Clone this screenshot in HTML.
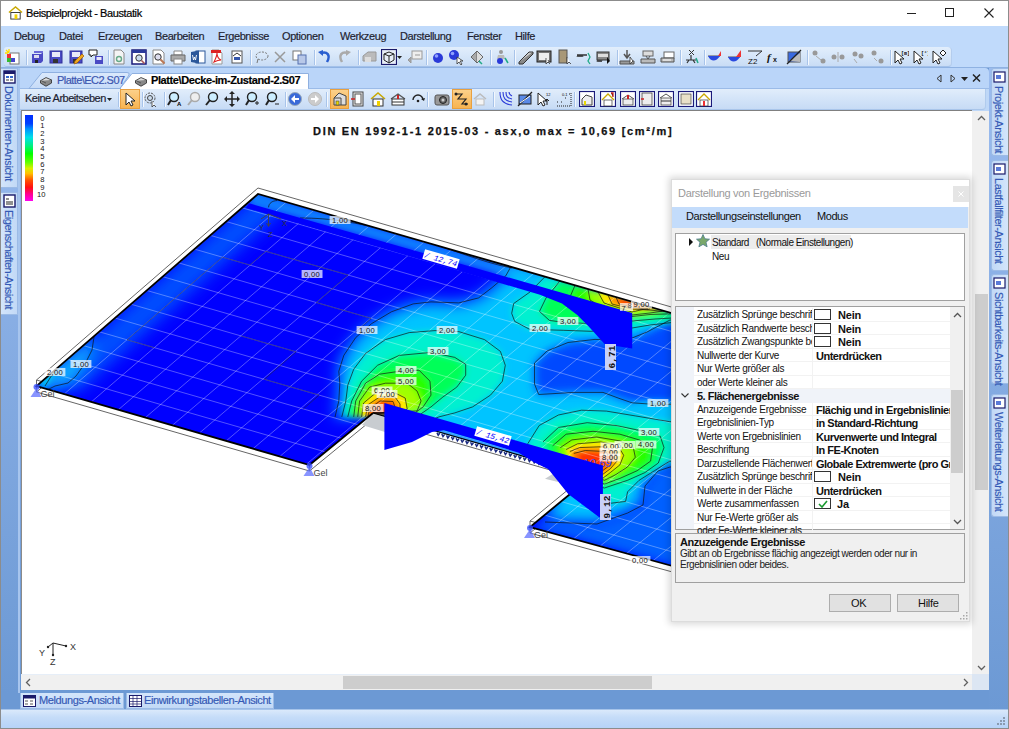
<!DOCTYPE html>
<html><head><meta charset="utf-8"><title>Baustatik</title>
<style>
*{margin:0;padding:0;box-sizing:border-box}
html,body{width:1009px;height:729px;overflow:hidden;background:#fff;font-family:"Liberation Sans",sans-serif;font-size:12px;color:#000}
.a{position:absolute}
.t{position:absolute;white-space:nowrap;line-height:1;-webkit-text-stroke:0.18px currentColor}
</style></head><body>
<div class="a" style="left:0px;top:0px;width:1009px;height:729px;background:#6c99d4"></div>
<div class="a" style="left:0px;top:0px;width:1009px;height:26px;background:#fff"></div>
<div class="a" style="left:0px;top:0px;width:1009px;height:1px;background:#8c8c8c"></div>
<div class="a" style="left:0px;top:0px;width:1px;height:729px;background:#8c8c8c"></div>
<div class="a" style="left:1008px;top:0px;width:1px;height:729px;background:#8c8c8c"></div>
<svg class="a" style="left:8px;top:5px" width="15" height="15" viewBox="0 0 16 16"><path d="M1 8l7-6 7 6" fill="none" stroke="#c9a800" stroke-width="1.5"/><rect x="3" y="8" width="10" height="7" fill="#fff" stroke="#333"/><rect x="7" y="10" width="3" height="5" fill="#f0d000"/></svg>
<div class="t" style="left:26px;top:8px;font-size:11px;color:#000;font-weight:normal;font-family:'Liberation Sans',sans-serif;letter-spacing:-0.4px;">Beispielprojekt - Baustatik</div>
<div class="a" style="left:907px;top:13px;width:9px;height:1px;background:#222"></div>
<div class="a" style="left:945px;top:8px;width:9px;height:9px;border:1px solid #222"></div>
<svg class="a" style="left:984px;top:8px" width="10" height="10" viewBox="0 0 10 10"><path d="M0.5 0.5L9.5 9.5M9.5 0.5L0.5 9.5" stroke="#222" stroke-width="1.1"/></svg>
<div class="a" style="left:1px;top:26px;width:1007px;height:41px;background:#c0dafb"></div>
<div class="t" style="left:14px;top:31px;font-size:11px;color:#1e1e30;font-weight:normal;font-family:'Liberation Sans',sans-serif;letter-spacing:-0.4px;">Debug</div>
<div class="t" style="left:59px;top:31px;font-size:11px;color:#1e1e30;font-weight:normal;font-family:'Liberation Sans',sans-serif;letter-spacing:-0.4px;">Datei</div>
<div class="t" style="left:98px;top:31px;font-size:11px;color:#1e1e30;font-weight:normal;font-family:'Liberation Sans',sans-serif;letter-spacing:-0.4px;">Erzeugen</div>
<div class="t" style="left:155px;top:31px;font-size:11px;color:#1e1e30;font-weight:normal;font-family:'Liberation Sans',sans-serif;letter-spacing:-0.4px;">Bearbeiten</div>
<div class="t" style="left:218px;top:31px;font-size:11px;color:#1e1e30;font-weight:normal;font-family:'Liberation Sans',sans-serif;letter-spacing:-0.4px;">Ergebnisse</div>
<div class="t" style="left:282px;top:31px;font-size:11px;color:#1e1e30;font-weight:normal;font-family:'Liberation Sans',sans-serif;letter-spacing:-0.4px;">Optionen</div>
<div class="t" style="left:340px;top:31px;font-size:11px;color:#1e1e30;font-weight:normal;font-family:'Liberation Sans',sans-serif;letter-spacing:-0.4px;">Werkzeug</div>
<div class="t" style="left:400px;top:31px;font-size:11px;color:#1e1e30;font-weight:normal;font-family:'Liberation Sans',sans-serif;letter-spacing:-0.4px;">Darstellung</div>
<div class="t" style="left:467px;top:31px;font-size:11px;color:#1e1e30;font-weight:normal;font-family:'Liberation Sans',sans-serif;letter-spacing:-0.4px;">Fenster</div>
<div class="t" style="left:515px;top:31px;font-size:11px;color:#1e1e30;font-weight:normal;font-family:'Liberation Sans',sans-serif;letter-spacing:-0.4px;">Hilfe</div>
<div class="a" style="left:4px;top:47px;width:948px;height:20px;border-radius:3px 4px 4px 3px;background:linear-gradient(#e2eefc,#d3e4f8 60%,#c9dcf5);border-bottom:1px solid #a3c1ea;border-right:1px solid #b4cdee"></div>
<div class="a" style="left:1px;top:67px;width:1007px;height:1px;background:#8fb2e2"></div>
<svg class="a" style="left:5px;top:49px" width="16" height="16" viewBox="0 0 16 16"><rect x="5" y="4" width="9" height="11" fill="#fff" stroke="#777"/><rect x="2" y="5" width="4" height="4" fill="#e33"/><rect x="2" y="9" width="4" height="4" fill="#3b3"/><rect x="6" y="9" width="4" height="4" fill="#44c"/><path d="M1 1l3 3M4 0v3M0 4h3" stroke="#fd0" stroke-width="1.3"/></svg>
<svg class="a" style="left:29px;top:49px" width="16" height="16" viewBox="0 0 16 16"><path d="M3 5h9l2-2v9l-2 2H3z" fill="#4a4ac4"/><rect x="5" y="6" width="5" height="3" fill="#dde"/><rect x="6" y="11" width="3" height="3" fill="#222"/><path d="M5 3h9" stroke="#6a6ad8" stroke-width="2"/></svg>
<svg class="a" style="left:48px;top:49px" width="16" height="16" viewBox="0 0 16 16"><rect x="2" y="2" width="12" height="12" fill="#4a4ac4" stroke="#30309a"/><rect x="4" y="3" width="8" height="5" fill="#e8e8f8"/><rect x="5" y="10" width="5" height="4" fill="#333"/></svg>
<svg class="a" style="left:68px;top:49px" width="16" height="16" viewBox="0 0 16 16"><rect x="2" y="2" width="12" height="12" fill="#4a4ac4" stroke="#30309a"/><rect x="4" y="3" width="8" height="5" fill="#e8e8f8"/><rect x="5" y="10" width="5" height="4" fill="#333"/><path d="M6 15l1-3 7-7 2 2-7 7z" fill="#f0a820" stroke="#a06000" stroke-width=".7"/></svg>
<svg class="a" style="left:88px;top:49px" width="16" height="16" viewBox="0 0 16 16"><path d="M1 1h8v5H5l-2 2V6H1z" fill="#fff" stroke="#222"/><rect x="7" y="7" width="8" height="8" fill="#4a4ac4"/><rect x="8.5" y="8" width="5" height="3" fill="#e8e8f8"/></svg>
<svg class="a" style="left:111px;top:49px" width="16" height="16" viewBox="0 0 16 16"><path d="M3 1h7l3 3v11H3z" fill="#f4f4f4" stroke="#888"/><circle cx="8" cy="10" r="2.5" fill="none" stroke="#6a8" stroke-width="1.4"/></svg>
<svg class="a" style="left:131px;top:49px" width="16" height="16" viewBox="0 0 16 16"><rect x="1" y="1" width="14" height="14" fill="#fff" stroke="#1a1a7a" stroke-width="1.5"/><rect x="1" y="1" width="14" height="3" fill="#2a3a9a"/><circle cx="8" cy="9" r="3.2" fill="#cde" stroke="#333"/><path d="M10.5 11.5l3 3" stroke="#a55" stroke-width="1.6"/></svg>
<svg class="a" style="left:151px;top:49px" width="16" height="16" viewBox="0 0 16 16"><path d="M2 1h8l3 3v11H2z" fill="#fff" stroke="#888"/><circle cx="7" cy="8" r="3.2" fill="#dde" stroke="#333"/><path d="M9.5 10.5l4 4" stroke="#b75" stroke-width="2"/></svg>
<svg class="a" style="left:170px;top:49px" width="16" height="16" viewBox="0 0 16 16"><path d="M4 2h8v4H4z" fill="#fff" stroke="#888"/><path d="M1 6h14v6H1z" fill="#aaa" stroke="#666"/><rect x="4" y="10" width="8" height="5" fill="#fff" stroke="#888"/></svg>
<svg class="a" style="left:190px;top:49px" width="16" height="16" viewBox="0 0 16 16"><rect x="6" y="2" width="9" height="12" fill="#fff" stroke="#2b579a"/><path d="M1 3l8-1.5v13L1 13z" fill="#2b579a"/><path d="M2.5 6l1 5 1-3 1 3 1-5" fill="none" stroke="#fff" stroke-width=".9"/></svg>
<svg class="a" style="left:209px;top:49px" width="16" height="16" viewBox="0 0 16 16"><path d="M3 1h7l3 3v11H3z" fill="#fff" stroke="#999"/><rect x="2" y="1" width="10" height="3" fill="#d22"/><path d="M5 13c2-4 3-7 3-9 0 3 2 6 4 7-3 0-5 1-7 2z" fill="none" stroke="#d22" stroke-width="1.1"/></svg>
<svg class="a" style="left:229px;top:49px" width="16" height="16" viewBox="0 0 16 16"><rect x="3" y="2" width="10" height="12" fill="#fff" stroke="#555"/><path d="M4 7l4-3 4 3" fill="none" stroke="#333"/><rect x="5" y="8" width="6" height="3" fill="#3355aa"/></svg>
<svg class="a" style="left:254px;top:49px" width="16" height="16" viewBox="0 0 16 16"><ellipse cx="8" cy="7" rx="6" ry="4" fill="none" stroke="#777" stroke-dasharray="2 1.3"/><path d="M4 10l-1 4" stroke="#777"/></svg>
<svg class="a" style="left:272px;top:49px" width="16" height="16" viewBox="0 0 16 16"><path d="M3 3l10 10M13 3L3 13" stroke="#999" stroke-width="1.5"/></svg>
<svg class="a" style="left:292px;top:49px" width="16" height="16" viewBox="0 0 16 16"><rect x="1" y="2" width="8" height="9" fill="#fff" stroke="#777"/><rect x="6" y="6" width="8" height="9" fill="#b8c8e8" stroke="#5570b0"/></svg>
<svg class="a" style="left:317px;top:49px" width="16" height="16" viewBox="0 0 16 16"><path d="M4 4c6-2 10 2 6 9" fill="none" stroke="#2a5fd0" stroke-width="2.5"/><path d="M1 3l5-2v6z" fill="#2a5fd0"/></svg>
<svg class="a" style="left:336px;top:49px" width="16" height="16" viewBox="0 0 16 16"><path d="M12 4c-6-2-10 2-6 9" fill="none" stroke="#aaa" stroke-width="2.5"/><path d="M15 3l-5-2v6z" fill="#aaa"/></svg>
<svg class="a" style="left:361px;top:49px" width="16" height="16" viewBox="0 0 16 16"><path d="M2 7l5-4h8v9H2z" fill="#bbb" stroke="#999"/><rect x="4" y="8" width="6" height="5" fill="#ddd"/></svg>
<svg class="a" style="left:381px;top:49px" width="16" height="16" viewBox="0 0 16 16"><rect x="0.5" y="0.5" width="15" height="15" fill="#e8eef8" stroke="#1a1a6a" stroke-width="1.2"/><path d="M3 5l5-2 5 2v6l-5 3-5-3z M3 5l5 2 5-2M8 7v7" fill="none" stroke="#222"/></svg>
<svg class="a" style="left:407px;top:49px" width="16" height="16" viewBox="0 0 16 16"><rect x="5" y="2" width="10" height="8" fill="#eee" stroke="#999"/><path d="M8 6h5M1 11l3-3v6z" stroke="#999" fill="#aaa"/></svg>
<svg class="a" style="left:430px;top:49px" width="16" height="16" viewBox="0 0 16 16"><circle cx="8" cy="9" r="5" fill="#2a3ad8"/><circle cx="6.5" cy="7" r="1.8" fill="#8fa0ff"/></svg>
<svg class="a" style="left:448px;top:49px" width="16" height="16" viewBox="0 0 16 16"><circle cx="6" cy="6" r="5" fill="#2a3ad8"/><circle cx="4.5" cy="4.5" r="1.8" fill="#8fa0ff"/><path d="M9 8v7l2-2 2 3 1-1-2-3h3z" fill="#fff" stroke="#333" stroke-width=".8"/></svg>
<svg class="a" style="left:469px;top:49px" width="16" height="16" viewBox="0 0 16 16"><path d="M2 8l6-6v12z" fill="#aaa" stroke="#666"/><path d="M8 2l6 6-6 6" fill="#ddd" stroke="#666"/><path d="M10 12l3 3" stroke="#2a8" stroke-width="1.5"/></svg>
<svg class="a" style="left:494px;top:49px" width="16" height="16" viewBox="0 0 16 16"><circle cx="7" cy="3" r="2" fill="#999"/><path d="M4 6h6l1 4H3z" fill="#bbb"/><circle cx="6" cy="12" r="3" fill="#2a3ad8"/><path d="M11 9l3 5" stroke="#2a8" stroke-width="1.5"/></svg>
<svg class="a" style="left:518px;top:49px" width="16" height="16" viewBox="0 0 16 16"><path d="M1 13l10-10h4l-10 10z" fill="#ccc" stroke="#333"/><path d="M1 13v2h4l10-10V3" fill="#888" stroke="#333"/></svg>
<svg class="a" style="left:536px;top:49px" width="16" height="16" viewBox="0 0 16 16"><rect x="1" y="2" width="14" height="11" fill="#777" stroke="#222"/><rect x="3" y="4" width="10" height="7" fill="#eee"/><path d="M10 9v6l2-2 2 2" fill="#fff" stroke="#333" stroke-width=".8"/></svg>
<svg class="a" style="left:556px;top:49px" width="16" height="16" viewBox="0 0 16 16"><rect x="3" y="1" width="8" height="13" fill="#a89878" stroke="#555"/><path d="M11 8v7l2-2 2 2" fill="#fff" stroke="#333" stroke-width=".8"/></svg>
<svg class="a" style="left:576px;top:49px" width="16" height="16" viewBox="0 0 16 16"><path d="M1 6h10" stroke="#333" stroke-width="1.5"/><path d="M1 8l1-2 1 2 1-2 1 2 1-2 1 2" fill="none" stroke="#333"/><path d="M12 4l2 4-2 4 2 3" fill="none" stroke="#2a8" stroke-width="1.3"/></svg>
<svg class="a" style="left:596px;top:49px" width="16" height="16" viewBox="0 0 16 16"><rect x="1" y="3" width="12" height="8" fill="#888" stroke="#333"/><rect x="2" y="5" width="10" height="3" fill="#ddd"/><path d="M1 13l1-2 1 2 1-2 1 2 1-2" stroke="#333" fill="none"/><path d="M11 8v7l3-3z" fill="#111"/></svg>
<svg class="a" style="left:619px;top:49px" width="16" height="16" viewBox="0 0 16 16"><path d="M1 12h14v3H1z" fill="#999" stroke="#555"/><path d="M8 1v7M5 5l3 4 3-4" fill="none" stroke="#555" stroke-width="1.5"/><path d="M11 8v7l3-3z" fill="#fff" stroke="#333" stroke-width=".8"/></svg>
<svg class="a" style="left:640px;top:49px" width="16" height="16" viewBox="0 0 16 16"><rect x="3" y="2" width="10" height="5" fill="#ddd" stroke="#666"/><path d="M1 10h14v4H1z" fill="#bbb" stroke="#555"/><path d="M6 7l2 3 2-3" stroke="#555" fill="none"/></svg>
<svg class="a" style="left:660px;top:49px" width="16" height="16" viewBox="0 0 16 16"><rect x="4" y="3" width="10" height="6" fill="#fff" stroke="#666"/><path d="M1 9h13v4H1z" fill="#bbb" stroke="#555"/><path d="M3 11h8" stroke="#fff"/></svg>
<svg class="a" style="left:684px;top:49px" width="16" height="16" viewBox="0 0 16 16"><path d="M5 1l5 5M10 1L5 6" stroke="#333"/><path d="M7 6v5M2 11h10M3 14l2-3M11 14l-2-3" stroke="#333" stroke-width="1.2"/><path d="M12 9l2 5" stroke="#2a8" stroke-width="1.5"/></svg>
<svg class="a" style="left:707px;top:49px" width="16" height="16" viewBox="0 0 16 16"><path d="M1 7h12" stroke="#555"/><path d="M1 7c3 6 8 6 12 0" fill="#2a4ae0"/><path d="M11 7l3-5v5" fill="#e33"/></svg>
<svg class="a" style="left:727px;top:49px" width="16" height="16" viewBox="0 0 16 16"><path d="M1 8h12" stroke="#555"/><path d="M1 8c3 6 8 6 12 0" fill="#2a4ae0"/><path d="M9 8l5-7v7" fill="#e33"/></svg>
<svg class="a" style="left:747px;top:49px" width="16" height="16" viewBox="0 0 16 16"><path d="M1 2h14l-6 5" fill="none" stroke="#333"/><text x="1" y="15" font-size="8" font-family="Liberation Sans" fill="#111">Z2</text></svg>
<svg class="a" style="left:766px;top:49px" width="16" height="16" viewBox="0 0 16 16"><text x="1" y="12" font-size="11" font-style="italic" font-weight="bold" font-family="Liberation Serif" fill="#111">f</text><text x="7" y="13" font-size="7" font-weight="bold" font-family="Liberation Sans" fill="#111">x</text></svg>
<svg class="a" style="left:786px;top:49px" width="16" height="16" viewBox="0 0 16 16"><rect x="2" y="3" width="12" height="10" fill="#3a6ae0" stroke="#555"/><path d="M3 12L14 4V13z" fill="#bbb"/><path d="M1 15L15 1" stroke="#222" stroke-width="1.2"/></svg>
<svg class="a" style="left:811px;top:49px" width="16" height="16" viewBox="0 0 16 16"><circle cx="4" cy="4" r="2.5" fill="#999"/><circle cx="12" cy="12" r="2.5" fill="#999"/><path d="M5 7l5 4" stroke="#aaa"/></svg>
<svg class="a" style="left:830px;top:49px" width="16" height="16" viewBox="0 0 16 16"><circle cx="4" cy="8" r="2.5" fill="#999"/><circle cx="12" cy="8" r="2.5" fill="#999"/><path d="M8 3v10" stroke="#aaa"/></svg>
<svg class="a" style="left:850px;top:49px" width="16" height="16" viewBox="0 0 16 16"><circle cx="5" cy="5" r="2.5" fill="#999"/><circle cx="11" cy="7" r="2.5" fill="#999"/><path d="M4 10l3 4" stroke="#aaa"/></svg>
<svg class="a" style="left:869px;top:49px" width="16" height="16" viewBox="0 0 16 16"><circle cx="5" cy="4" r="2.5" fill="#999"/><circle cx="12" cy="12" r="2.5" fill="#999"/><path d="M5 9l3 3" stroke="#aaa"/></svg>
<svg class="a" style="left:893px;top:49px" width="16" height="16" viewBox="0 0 16 16"><path d="M2 2v12l3-3 2 4 2-1-2-4h4z" fill="#fff" stroke="#222"/><text x="8" y="6" font-size="5" font-family="Liberation Mono" font-weight="bold">[m]</text></svg>
<svg class="a" style="left:912px;top:49px" width="16" height="16" viewBox="0 0 16 16"><path d="M2 2v12l3-3 2 4 2-1-2-4h4z" fill="#fff" stroke="#222"/><text x="9" y="6" font-size="5" font-family="Liberation Mono" font-weight="bold">[°]</text></svg>
<svg class="a" style="left:931px;top:49px" width="16" height="16" viewBox="0 0 16 16"><path d="M2 2v12l3-3 2 4 2-1-2-4h4z" fill="#fff" stroke="#222"/><path d="M12 1l3 3-3 3-3-3z" fill="#fff" stroke="#222"/></svg>
<svg class="a" style="left:397px;top:56px" width="5" height="3"><path d="M0 0h5L2.5 3z" fill="#222"/></svg>
<div class="a" style="left:26px;top:50px;width:1px;height:15px;background:#a8c4ea;box-shadow:1px 0 0 #f4f8fe"></div>
<div class="a" style="left:108px;top:50px;width:1px;height:15px;background:#a8c4ea;box-shadow:1px 0 0 #f4f8fe"></div>
<div class="a" style="left:250px;top:50px;width:1px;height:15px;background:#a8c4ea;box-shadow:1px 0 0 #f4f8fe"></div>
<div class="a" style="left:314px;top:50px;width:1px;height:15px;background:#a8c4ea;box-shadow:1px 0 0 #f4f8fe"></div>
<div class="a" style="left:358px;top:50px;width:1px;height:15px;background:#a8c4ea;box-shadow:1px 0 0 #f4f8fe"></div>
<div class="a" style="left:426px;top:50px;width:1px;height:15px;background:#a8c4ea;box-shadow:1px 0 0 #f4f8fe"></div>
<div class="a" style="left:490px;top:50px;width:1px;height:15px;background:#a8c4ea;box-shadow:1px 0 0 #f4f8fe"></div>
<div class="a" style="left:514px;top:50px;width:1px;height:15px;background:#a8c4ea;box-shadow:1px 0 0 #f4f8fe"></div>
<div class="a" style="left:617px;top:50px;width:1px;height:15px;background:#a8c4ea;box-shadow:1px 0 0 #f4f8fe"></div>
<div class="a" style="left:680px;top:50px;width:1px;height:15px;background:#a8c4ea;box-shadow:1px 0 0 #f4f8fe"></div>
<div class="a" style="left:704px;top:50px;width:1px;height:15px;background:#a8c4ea;box-shadow:1px 0 0 #f4f8fe"></div>
<div class="a" style="left:807px;top:50px;width:1px;height:15px;background:#a8c4ea;box-shadow:1px 0 0 #f4f8fe"></div>
<div class="a" style="left:890px;top:50px;width:1px;height:15px;background:#a8c4ea;box-shadow:1px 0 0 #f4f8fe"></div>
<div class="a" style="left:1px;top:68px;width:20px;height:625px;background:linear-gradient(#9bbcef,#6c99d4)"></div>
<div class="a" style="left:1px;top:68px;width:17px;height:120px;background:linear-gradient(90deg,#d3e5fb,#c2d9f6);border:1px solid #9cbbe6;border-left:none"></div>
<div class="a" style="left:1px;top:192px;width:17px;height:123px;background:linear-gradient(90deg,#d3e5fb,#c2d9f6);border:1px solid #9cbbe6;border-left:none"></div>
<div class="a" style="left:18px;top:68px;width:2px;height:625px;background:#a7c5ee"></div>
<svg class="a" style="left:3px;top:70px" width="13" height="14" viewBox="0 0 13 14"><rect x="1" y="1" width="11" height="12" fill="#fff" stroke="#1a1a6a" stroke-width="1.4"/><rect x="1" y="1" width="11" height="3" fill="#1a1a6a"/><rect x="3" y="6" width="3" height="2" fill="#36c"/><rect x="7" y="6" width="3" height="2" fill="#36c"/><rect x="3" y="9" width="3" height="2" fill="#999"/><rect x="7" y="9" width="3" height="2" fill="#999"/></svg>
<svg class="a" style="left:3px;top:194px" width="13" height="14" viewBox="0 0 13 14"><rect x="1" y="1" width="11" height="12" fill="#fff" stroke="#1a1a6a" stroke-width="1.4"/><path d="M3 5h3M3 8h7M3 10h7" stroke="#222"/></svg>
<div class="t" style="left:3px;top:86px;font-size:11px;color:#3459b5;font-weight:normal;font-family:'Liberation Sans',sans-serif;letter-spacing:-0.4px;writing-mode:vertical-rl">Dokumenten-Ansicht</div>
<div class="t" style="left:3px;top:210px;font-size:11px;color:#3459b5;font-weight:normal;font-family:'Liberation Sans',sans-serif;letter-spacing:-0.5px;writing-mode:vertical-rl">Eigenschaften-Ansicht</div>
<div class="a" style="left:989px;top:68px;width:19px;height:642px;background:linear-gradient(#9bbcef,#6c99d4)"></div>
<div class="a" style="left:991px;top:68px;width:17px;height:88px;background:linear-gradient(90deg,#c2d9f6,#d3e5fb);border:1px solid #9cbbe6;border-right:none;border-radius:3px 0 0 3px"></div>
<div class="t" style="left:993px;top:86px;font-size:11px;color:#3459b5;font-weight:normal;font-family:'Liberation Sans',sans-serif;letter-spacing:-0.45px;writing-mode:vertical-rl">Projekt-Ansicht</div>
<svg class="a" style="left:993px;top:70px" width="14" height="14" viewBox="0 0 14 14"><rect x="1" y="2" width="11" height="10" fill="#fff" stroke="#1a1a6a" stroke-width="1.2"/><rect x="3" y="5" width="5" height="4" fill="#5a7ad8"/></svg>
<div class="a" style="left:991px;top:160px;width:17px;height:111px;background:linear-gradient(90deg,#c2d9f6,#d3e5fb);border:1px solid #9cbbe6;border-right:none;border-radius:3px 0 0 3px"></div>
<div class="t" style="left:993px;top:178px;font-size:11px;color:#3459b5;font-weight:normal;font-family:'Liberation Sans',sans-serif;letter-spacing:-0.45px;writing-mode:vertical-rl">Lastfallfilter-Ansicht</div>
<svg class="a" style="left:993px;top:162px" width="14" height="14" viewBox="0 0 14 14"><rect x="1" y="2" width="11" height="10" fill="#fff" stroke="#1a1a6a" stroke-width="1.2"/><rect x="3" y="5" width="5" height="4" fill="#5a7ad8"/></svg>
<div class="a" style="left:991px;top:274px;width:17px;height:110px;background:linear-gradient(90deg,#c2d9f6,#d3e5fb);border:1px solid #9cbbe6;border-right:none;border-radius:3px 0 0 3px"></div>
<div class="t" style="left:993px;top:292px;font-size:11px;color:#3459b5;font-weight:normal;font-family:'Liberation Sans',sans-serif;letter-spacing:-0.45px;writing-mode:vertical-rl">Sichtbarkeits-Ansicht</div>
<svg class="a" style="left:993px;top:276px" width="14" height="14" viewBox="0 0 14 14"><rect x="1" y="2" width="11" height="10" fill="#fff" stroke="#1a1a6a" stroke-width="1.2"/><rect x="3" y="5" width="5" height="4" fill="#5a7ad8"/></svg>
<div class="a" style="left:991px;top:394px;width:17px;height:123px;background:linear-gradient(90deg,#c2d9f6,#d3e5fb);border:1px solid #9cbbe6;border-right:none;border-radius:3px 0 0 3px"></div>
<div class="t" style="left:993px;top:412px;font-size:11px;color:#3459b5;font-weight:normal;font-family:'Liberation Sans',sans-serif;letter-spacing:-0.45px;writing-mode:vertical-rl">Weiterleitungs-Ansicht</div>
<svg class="a" style="left:993px;top:396px" width="14" height="14" viewBox="0 0 14 14"><rect x="1" y="2" width="11" height="10" fill="#fff" stroke="#1a1a6a" stroke-width="1.2"/><rect x="3" y="5" width="5" height="4" fill="#5a7ad8"/></svg>
<div class="a" style="left:20px;top:68px;width:969px;height:21px;background:#bad5f9;border-radius:0 4px 0 0"></div>
<div class="a" style="left:20px;top:88px;width:969px;height:1px;background:#9bbbe8"></div>
<svg class="a" style="left:20px;top:68px" width="300" height="21" viewBox="0 0 300 21"><defs><linearGradient id="tg" x1="0" y1="0" x2="0" y2="1"><stop offset="0" stop-color="#dbe9fc"/><stop offset="1" stop-color="#c6dbf8"/></linearGradient></defs><path d="M9 20.5L22 4.5H107Q110 4.5 109 7L100 20.5z" fill="url(#tg)" stroke="#8fb0e0"/><path d="M100 20.5L112 5.5H288.5V20.5z" fill="#fff" stroke="#8fb0e0"/><path d="M101 20.5H288" stroke="#fff" stroke-width="1.5"/></svg>
<svg class="a" style="left:39px;top:76px" width="14" height="11" viewBox="0 0 16 14"><path d="M1 6l7-4 7 3-7 4z" fill="#ddd" stroke="#333" stroke-width="1.1"/><path d="M1 6v3l7 4 7-4V5" fill="#888" stroke="#333" stroke-width="1.1"/><path d="M3 6.5l5 2.5" stroke="#333" stroke-width=".8"/></svg>
<svg class="a" style="left:134px;top:76px" width="14" height="11" viewBox="0 0 16 14"><path d="M1 6l7-4 7 3-7 4z" fill="#ddd" stroke="#333" stroke-width="1.1"/><path d="M1 6v3l7 4 7-4V5" fill="#888" stroke="#333" stroke-width="1.1"/><path d="M3 6.5l5 2.5" stroke="#333" stroke-width=".8"/></svg>
<div class="t" style="left:57px;top:75px;font-size:11px;color:#3a55b0;font-weight:normal;font-family:'Liberation Sans',sans-serif;letter-spacing:-0.55px;">Platte\EC2.S07</div>
<div class="t" style="left:151px;top:75px;font-size:11px;color:#000;font-weight:bold;font-family:'Liberation Sans',sans-serif;letter-spacing:-0.4px;">Platte\Decke-im-Zustand-2.S07</div>
<svg class="a" style="left:935px;top:73px" width="50" height="12" viewBox="0 0 50 12"><path d="M6 2v7L2 5.5z" fill="none" stroke="#333"/><path d="M16 2v7l4-3.5z" fill="none" stroke="#333"/><path d="M26 4h7l-3.5 4z" fill="#222"/><path d="M38 1.5l7 7M45 1.5l-7 7" stroke="#222" stroke-width="1.5"/></svg>
<div class="a" style="left:20px;top:89px;width:969px;height:22px;background:#bed7f7"></div>
<div class="a" style="left:20px;top:89px;width:966px;height:21px;background:linear-gradient(#e1edfb,#d2e3f8 55%,#c7dbf5);border-bottom:1px solid #a9c5ea;border-right:1px solid #b0cbed;border-radius:0 0 4px 0"></div>
<div class="t" style="left:25px;top:93px;font-size:11px;color:#1e1e30;font-weight:normal;font-family:'Liberation Sans',sans-serif;letter-spacing:-0.5px;">Keine Arbeitseben</div>
<svg class="a" style="left:107px;top:98px" width="5" height="3"><path d="M0 0h5L2.5 3z" fill="#222"/></svg>
<div class="a" style="left:120px;top:89px;width:20px;height:20px;background:linear-gradient(#fbd08a,#f8b451);border:1px solid #e8a040"></div>
<div class="a" style="left:330px;top:89px;width:19px;height:20px;background:linear-gradient(#fbd08a,#f8b451);border:1px solid #e8a040"></div>
<div class="a" style="left:452px;top:89px;width:20px;height:20px;background:linear-gradient(#fbd08a,#f8b451);border:1px solid #e8a040"></div>
<svg class="a" style="left:122px;top:91px" width="16" height="16" viewBox="0 0 16 16"><path d="M4 2v12l3-3 2 4 2-1-2-4h4z" fill="#fff" stroke="#222"/></svg>
<svg class="a" style="left:142px;top:91px" width="16" height="16" viewBox="0 0 16 16"><circle cx="8" cy="7" r="5" fill="none" stroke="#555" stroke-dasharray="2 1"/><circle cx="8" cy="7" r="2.5" fill="#cde" stroke="#444"/><path d="M10 10v6l2-2 2 2" fill="#fff" stroke="#333" stroke-width=".8"/></svg>
<svg class="a" style="left:167px;top:91px" width="16" height="16" viewBox="0 0 16 16"><circle cx="7" cy="6" r="4.5" fill="#cef" stroke="#222" stroke-width="1.4"/><path d="M4 9l-3 5" stroke="#222" stroke-width="2"/><text x="10" y="15" font-size="6" font-family="Liberation Sans" font-weight="bold">A</text></svg>
<svg class="a" style="left:186px;top:91px" width="16" height="16" viewBox="0 0 16 16"><circle cx="9" cy="6" r="4.5" fill="#eee" stroke="#aaa" stroke-width="1.4"/><path d="M6 9l-4 5" stroke="#aaa" stroke-width="2"/></svg>
<svg class="a" style="left:204px;top:91px" width="16" height="16" viewBox="0 0 16 16"><circle cx="9" cy="6" r="4.5" fill="#cef" stroke="#222" stroke-width="1.4"/><path d="M6 9l-4 5" stroke="#222" stroke-width="2"/></svg>
<svg class="a" style="left:224px;top:91px" width="16" height="16" viewBox="0 0 16 16"><path d="M8 1v14M1 8h14" stroke="#222" stroke-width="1.5"/><path d="M8 0l-3 3h6zM8 16l-3-3h6zM0 8l3-3v6zM16 8l-3-3v6z" fill="#222"/></svg>
<svg class="a" style="left:244px;top:91px" width="16" height="16" viewBox="0 0 16 16"><circle cx="8" cy="6" r="4.5" fill="#cef" stroke="#222" stroke-width="1.4"/><path d="M5 9l-3 5" stroke="#222" stroke-width="2"/><path d="M11 12h4M13 10v4" stroke="#222"/></svg>
<svg class="a" style="left:264px;top:91px" width="16" height="16" viewBox="0 0 16 16"><circle cx="8" cy="6" r="4.5" fill="#cef" stroke="#222" stroke-width="1.4"/><path d="M5 9l-3 5" stroke="#222" stroke-width="2"/><path d="M11 13h4" stroke="#222"/></svg>
<svg class="a" style="left:287px;top:91px" width="16" height="16" viewBox="0 0 16 16"><circle cx="8" cy="8" r="6.5" fill="#3a6ad8" stroke="#9ab"/><path d="M4 8l4-4v3h4v2H8v3z" fill="#fff"/></svg>
<svg class="a" style="left:307px;top:91px" width="16" height="16" viewBox="0 0 16 16"><circle cx="8" cy="8" r="6.5" fill="#ccc" stroke="#bbb"/><path d="M12 8l-4-4v3H4v2h4v3z" fill="#fff"/></svg>
<svg class="a" style="left:332px;top:91px" width="16" height="16" viewBox="0 0 16 16"><path d="M2 7l5-5 7 3v9H2z" fill="#ddd" stroke="#444"/><path d="M2 7h7v7" fill="none" stroke="#444"/><rect x="4" y="10" width="3" height="4" fill="#e8d800" stroke="#444" stroke-width=".6"/></svg>
<svg class="a" style="left:350px;top:91px" width="16" height="16" viewBox="0 0 16 16"><rect x="3" y="1" width="10" height="14" fill="#eee" stroke="#444"/><rect x="5" y="3" width="6" height="10" fill="#fff" stroke="#555"/><path d="M1 8h4" stroke="#c22" stroke-width="1.5"/></svg>
<svg class="a" style="left:370px;top:91px" width="16" height="16" viewBox="0 0 16 16"><path d="M1 8l7-6 7 6" fill="none" stroke="#c9a800" stroke-width="1.5"/><rect x="3" y="8" width="10" height="7" fill="#fff" stroke="#333"/><rect x="7" y="10" width="3" height="5" fill="#f0d000"/></svg>
<svg class="a" style="left:390px;top:91px" width="16" height="16" viewBox="0 0 16 16"><path d="M1 8l7-5 7 5" fill="none" stroke="#555" stroke-width="1.3"/><rect x="2" y="8" width="12" height="6" fill="#fff" stroke="#333"/><path d="M2 11h12" stroke="#333"/><rect x="7" y="4" width="2" height="4" fill="#c22"/></svg>
<svg class="a" style="left:410px;top:91px" width="16" height="16" viewBox="0 0 16 16"><path d="M3 9a5 5 0 1 1 10 0" fill="none" stroke="#222" stroke-width="1.4"/><path d="M11 8l3 2 1-3z" fill="#222"/><circle cx="8" cy="10" r="1.3" fill="#222"/></svg>
<svg class="a" style="left:434px;top:91px" width="16" height="16" viewBox="0 0 16 16"><rect x="1" y="4" width="14" height="10" rx="2" fill="#999" stroke="#555"/><circle cx="9" cy="9" r="3.5" fill="#666" stroke="#222"/><circle cx="9" cy="9" r="1.5" fill="#ccc"/></svg>
<svg class="a" style="left:453px;top:91px" width="16" height="16" viewBox="0 0 16 16"><path d="M2 3h7l-4 5 8 0-4 5h6" fill="none" stroke="#222" stroke-width="1.2"/><circle cx="3" cy="3" r="1.5" fill="#222"/><circle cx="13" cy="13" r="1.5" fill="#222"/></svg>
<svg class="a" style="left:472px;top:91px" width="16" height="16" viewBox="0 0 16 16"><path d="M2 8l6-5 6 5" fill="none" stroke="#bbb" stroke-width="1.4"/><rect x="4" y="8" width="8" height="6" fill="#f4f4f4" stroke="#bbb"/></svg>
<svg class="a" style="left:497px;top:91px" width="16" height="16" viewBox="0 0 16 16"><path d="M3 1c0 8 3 12 12 13M6 1c0 6 2 9 9 10M9 1c0 4 1 6 6 7M12 1c0 2 1 3 3 4" fill="none" stroke="#2a3ad8" stroke-width="1.1"/></svg>
<svg class="a" style="left:517px;top:91px" width="16" height="16" viewBox="0 0 16 16"><rect x="2" y="4" width="12" height="9" fill="#5a8ae8" stroke="#222"/><path d="M1 15L15 1" stroke="#222" stroke-width="1.3"/><path d="M3 12l10-7" stroke="#fff"/></svg>
<svg class="a" style="left:536px;top:91px" width="16" height="16" viewBox="0 0 16 16"><path d="M2 2v12l3-3 2 4 2-1-2-4h4z" fill="#fff" stroke="#222"/><text x="10" y="5" font-size="4" font-family="Liberation Sans">12</text><path d="M11 8v6M9 10l2-2 2 2" stroke="#222" fill="none"/></svg>
<svg class="a" style="left:556px;top:91px" width="16" height="16" viewBox="0 0 16 16"><path d="M1 15h14M15 15V1M1 11h2M5 11h2M9 7h2M13 3h2" stroke="#222" stroke-dasharray="1 1"/><text x="6" y="5" font-size="4" font-family="Liberation Sans">0.1</text></svg>
<svg class="a" style="left:579px;top:91px" width="16" height="16" viewBox="0 0 16 16"><rect x="0.5" y="0.5" width="15" height="15" fill="#fff" stroke="#1a1a7a" stroke-width="1.2"/><path d="M3 8l4-4 6 2v8H3z" fill="#eee" stroke="#444"/><rect x="5" y="10" width="2" height="4" fill="#e8d800"/></svg>
<svg class="a" style="left:600px;top:91px" width="16" height="16" viewBox="0 0 16 16"><rect x="0.5" y="0.5" width="15" height="15" fill="#fff" stroke="#1a1a7a" stroke-width="1.2"/><path d="M2 9l6-6 6 6" fill="#fff" stroke="#c9a800" stroke-width="1.3"/><path d="M11 2h2v4" stroke="#c22" stroke-width="1.3"/><rect x="4" y="9" width="8" height="6" fill="#fff" stroke="#333" stroke-width=".7"/></svg>
<svg class="a" style="left:620px;top:91px" width="16" height="16" viewBox="0 0 16 16"><rect x="0.5" y="0.5" width="15" height="15" fill="#fff" stroke="#1a1a7a" stroke-width="1.2"/><path d="M2 8l6-4 6 4" fill="none" stroke="#555"/><rect x="3" y="8" width="10" height="6" fill="#eee" stroke="#333" stroke-width=".7"/><rect x="7" y="4" width="2" height="4" fill="#c22"/></svg>
<svg class="a" style="left:639px;top:91px" width="16" height="16" viewBox="0 0 16 16"><rect x="0.5" y="0.5" width="15" height="15" fill="#fff" stroke="#1a1a7a" stroke-width="1.2"/><rect x="3" y="2" width="10" height="12" fill="#eee" stroke="#444" stroke-width=".8"/><path d="M2 8h3" stroke="#c22" stroke-width="1.5"/></svg>
<svg class="a" style="left:658px;top:91px" width="16" height="16" viewBox="0 0 16 16"><rect x="0.5" y="0.5" width="15" height="15" fill="#fff" stroke="#1a1a7a" stroke-width="1.2"/><path d="M2 7l6-4 6 4" fill="none" stroke="#555"/><rect x="3" y="7" width="10" height="7" fill="#eee" stroke="#333" stroke-width=".7"/><path d="M3 10h10" stroke="#333"/></svg>
<svg class="a" style="left:678px;top:91px" width="16" height="16" viewBox="0 0 16 16"><rect x="0.5" y="0.5" width="15" height="15" fill="#fff" stroke="#1a1a7a" stroke-width="1.2"/><rect x="3" y="3" width="10" height="10" fill="#e8e0c8" stroke="#444" stroke-width=".7"/></svg>
<svg class="a" style="left:696px;top:91px" width="16" height="16" viewBox="0 0 16 16"><rect x="0.5" y="0.5" width="15" height="15" fill="#fff" stroke="#1a1a7a" stroke-width="1.2"/><path d="M2 9l6-6 6 6" fill="#fff" stroke="#c9a800" stroke-width="1.3"/><rect x="4" y="9" width="8" height="6" fill="#fff" stroke="#333" stroke-width=".7"/><rect x="7" y="10" width="2" height="5" fill="#e33"/></svg>
<div class="a" style="left:118px;top:92px;width:1px;height:15px;background:#a8c4ea;box-shadow:1px 0 0 #f4f8fe"></div>
<div class="a" style="left:142px;top:92px;width:1px;height:15px;background:#a8c4ea;box-shadow:1px 0 0 #f4f8fe"></div>
<div class="a" style="left:164px;top:92px;width:1px;height:15px;background:#a8c4ea;box-shadow:1px 0 0 #f4f8fe"></div>
<div class="a" style="left:285px;top:92px;width:1px;height:15px;background:#a8c4ea;box-shadow:1px 0 0 #f4f8fe"></div>
<div class="a" style="left:326px;top:92px;width:1px;height:15px;background:#a8c4ea;box-shadow:1px 0 0 #f4f8fe"></div>
<div class="a" style="left:427px;top:92px;width:1px;height:15px;background:#a8c4ea;box-shadow:1px 0 0 #f4f8fe"></div>
<div class="a" style="left:493px;top:92px;width:1px;height:15px;background:#a8c4ea;box-shadow:1px 0 0 #f4f8fe"></div>
<div class="a" style="left:574px;top:92px;width:1px;height:15px;background:#a8c4ea;box-shadow:1px 0 0 #f4f8fe"></div>
<div class="a" style="left:21px;top:110px;width:951px;height:564px;background:#fff;border-top:1px solid #808080;border-left:1px solid #8a8a8a"></div>
<svg class="a" style="left:21px;top:111px" width="951" height="563" viewBox="21 111 951 563">
<defs>
<linearGradient id="leg" x1="0" y1="0" x2="0" y2="1">
<stop offset="0" stop-color="#0030ff"/><stop offset="0.1" stop-color="#0040ff"/><stop offset="0.16" stop-color="#0090ff"/>
<stop offset="0.26" stop-color="#00e0e8"/><stop offset="0.36" stop-color="#00f080"/><stop offset="0.45" stop-color="#00ff00"/>
<stop offset="0.55" stop-color="#60ff00"/><stop offset="0.62" stop-color="#d8f000"/><stop offset="0.68" stop-color="#ffc000"/>
<stop offset="0.76" stop-color="#ff5000"/><stop offset="0.84" stop-color="#ff1010"/><stop offset="0.92" stop-color="#ff0090"/><stop offset="1" stop-color="#ff00f0"/>
</linearGradient>
<filter id="bl8" x="-50%" y="-50%" width="200%" height="200%"><feGaussianBlur stdDeviation="8"/></filter>
<filter id="bl5" x="-50%" y="-50%" width="200%" height="200%"><feGaussianBlur stdDeviation="5"/></filter>
<filter id="bl3" x="-50%" y="-50%" width="200%" height="200%"><feGaussianBlur stdDeviation="3"/></filter><filter id="bl2" x="-50%" y="-50%" width="200%" height="200%"><feGaussianBlur stdDeviation="1.6"/></filter>
<filter id="bl12" x="-50%" y="-50%" width="200%" height="200%"><feGaussianBlur stdDeviation="12"/></filter>
<clipPath id="pc"><polygon points="258.0,194.0 720.0,327.0 720.0,579.0 530.0,527.0 592.0,476.0 373.0,413.0 309.5,465.0 36.5,386.0"/></clipPath>
</defs>
<rect x="25" y="115" width="8" height="86" fill="url(#leg)"/>
<text x="44.5" y="120.7" text-anchor="end" font-family="Liberation Sans" font-size="7.6" fill="#111">0</text>
<text x="44.5" y="128.3" text-anchor="end" font-family="Liberation Sans" font-size="7.6" fill="#111">1</text>
<text x="44.5" y="136.0" text-anchor="end" font-family="Liberation Sans" font-size="7.6" fill="#111">2</text>
<text x="44.5" y="143.6" text-anchor="end" font-family="Liberation Sans" font-size="7.6" fill="#111">3</text>
<text x="44.5" y="151.3" text-anchor="end" font-family="Liberation Sans" font-size="7.6" fill="#111">4</text>
<text x="44.5" y="158.9" text-anchor="end" font-family="Liberation Sans" font-size="7.6" fill="#111">5</text>
<text x="44.5" y="166.6" text-anchor="end" font-family="Liberation Sans" font-size="7.6" fill="#111">6</text>
<text x="44.5" y="174.2" text-anchor="end" font-family="Liberation Sans" font-size="7.6" fill="#111">7</text>
<text x="44.5" y="181.9" text-anchor="end" font-family="Liberation Sans" font-size="7.6" fill="#111">8</text>
<text x="44.5" y="189.6" text-anchor="end" font-family="Liberation Sans" font-size="7.6" fill="#111">9</text>
<text x="45.5" y="197.2" text-anchor="end" font-family="Liberation Sans" font-size="7.6" fill="#111">10</text>
<text x="313" y="134.5" font-family="Liberation Sans" font-weight="bold" font-size="11" letter-spacing="1.7" fill="#111" stroke="#111" stroke-width="0.25">DIN EN 1992-1-1 2015-03 - asx,o max = 10,69 [cm²/m]</text>
<polygon points="258.0,188.0 720.0,321.0 720.0,573.0 530.0,521.0 592.0,470.0 373.0,407.0 309.5,459.0 36.5,380.0" fill="#fff" stroke="#555" stroke-width="0.9"/>
<polygon points="258.0,200.0 720.0,333.0 720.0,585.0 530.0,533.0 592.0,482.0 373.0,419.0 309.5,471.0 36.5,392.0" fill="#fff" stroke="#555" stroke-width="0.9"/>
<line x1="36.5" y1="380" x2="36.5" y2="392" stroke="#555" stroke-width="0.9"/>
<line x1="309.5" y1="459" x2="309.5" y2="471" stroke="#555" stroke-width="0.9"/>
<line x1="530" y1="521" x2="530" y2="533" stroke="#555" stroke-width="0.9"/>
<polygon points="362,425 373,413 385,416.5 385,432" fill="#c8ccd0"/>
<polygon points="545,478.7 556,472 558,482" fill="#c8ccd0"/>
<g clip-path="url(#pc)">
<polygon points="258.0,194.0 720.0,327.0 720.0,579.0 530.0,527.0 592.0,476.0 373.0,413.0 309.5,465.0 36.5,386.0" fill="#0000ff"/>
<g filter="url(#bl8)">
<polygon points="258,194 36.5,386 80,390 285,208" fill="#0050ff"/>
</g><g filter="url(#bl3)">
<polygon points="250,190 720,325 720,338 250,205" fill="#0a7cff"/>
</g>
<g filter="url(#bl8)"><polygon points="335.0,417.0 338.8,401.0 339.8,383.2 338.8,371.3 343.8,355.4 355.7,337.6 371.5,323.7 391.4,311.8 413.2,303.9 431.0,301.9 458.8,302.9 478.6,297.9 491.9,287.7 505.8,275.8 509.7,268.8 512.0,264.0 720.0,327.0 720.0,467.0 670.0,467.0 658.0,471.0 645.0,486.0 643.0,505.0 627.6,513.0 597.0,524.0 545.0,522.0 560.0,480.0 373.0,413.0" fill="#00c4ff"/><polygon points="94,337 92,350 86,362 76,376 68,383 55,386 47,390 36.5,386" fill="#10c0ff"/></g>
<g filter="url(#bl5)"><polygon points="547.0,351.0 534.5,363.0 534.5,384.0 538.7,394.5 574.0,392.4 603.0,392.4 620.0,398.7 632.0,402.8 649.0,404.0 720.0,405.0 720.0,322.0 670.0,320.0 647.0,332.0 632.0,338.0 615.7,340.4 595.0,339.4 568.0,342.5" fill="#0048ff"/><polygon points="545,522 597,524 627.6,513 643,505 645,486 658,471 670,467 720,467 720,579 530,527" fill="#0060ff"/></g>
<g filter="url(#bl3)">
<polygon points="60,366 52,378 46,387 36.5,386 50,372" fill="#00e0f0"/>
<ellipse cx="655" cy="415" rx="30" ry="14" fill="#00c0ff"/>
<polygon points="341.8,416.9 345.8,401.0 347.8,385.1 353.7,369.3 365.6,353.4 385.4,339.6 409.2,332.6 435.0,330.6 458.8,331.6 484.5,339.6 500.4,351.4 505.3,365.3 502.4,381.2 490.5,395.1 472.6,406.9 454.8,412.9 438.9,416.9 420.0,425.0 373.0,413.0" fill="#00f0d0"/>
<polygon points="347.8,416.9 351.7,401.0 361.6,381.2 377.5,365.3 399.3,355.4 431.0,352.4 454.8,357.4 465.7,364.3 465.7,375.2 456.8,387.1 442.9,397.0 431.0,406.9 415.0,418.0 373.0,413.0" fill="#00ff58"/>
<polygon points="353.7,416.9 355.7,401.0 365.6,383.2 379.5,374.2 399.3,371.3 419.1,370.3 430.0,381.2 431.0,395.1 423.1,406.9 415.1,412.9 373.0,413.0" fill="#28ff00"/>
<polygon points="357.7,416.9 359.6,401.0 369.6,387.1 385.4,383.2 407.2,383.2 417.1,391.1 421.1,401.0 417.1,410.9 373.0,413.0" fill="#a0ff00"/>
<polygon points="545.0,276.7 530.0,292.0 513.7,303.5 511.7,313.4 514.7,321.4 529.6,329.3 563.2,330.3 591.0,331.3 632.0,328.0 650.0,325.0 672.0,322.5 720.0,322.0 720.0,327.0" fill="#00f0d0"/>
<polygon points="560.0,281.0 546.0,298.0 539.5,311.4 549.4,320.4 563.2,322.3 583.0,323.3 632.0,321.0 655.0,319.0 672.0,318.0 720.0,318.0 720.0,327.0" fill="#00ff58"/>
<polygon points="575.0,285.4 570.0,297.0 580.0,306.0 600.0,312.0 632.0,316.5 650.0,314.5 672.0,313.8 720.0,313.0 720.0,327.0" fill="#28ff00"/>
<polygon points="588.0,289.0 590.0,300.0 603.0,308.0 632.0,315.0 650.0,313.0 662.0,311.2" fill="#a0ff00"/>
<polygon points="527.7,443.8 539.2,425.5 558.4,415.0 581.5,410.2 606.4,411.1 635.3,415.9 669.8,421.7 720.0,425.0 720.0,465.0 669.8,461.1 654.5,470.7 639.1,480.3 627.6,491.8 625.6,501.4 610.3,503.3 603.0,500.0 560.0,480.0 527.0,450.0" fill="#00f0d0"/>
<polygon points="543.0,441.9 558.4,427.5 587.2,422.7 616.0,425.5 639.1,430.3 660.2,436.1 664.0,447.6 658.3,463.0 644.9,472.6 627.6,480.3 610.3,486.0 604.5,488.0 560.0,478.0" fill="#00ff58"/>
<polygon points="552.7,445.7 566.1,434.2 593.0,431.3 619.9,434.2 639.1,439.9 652.5,447.6 650.6,461.1 637.2,470.7 619.9,478.4 604.5,484.1 565.0,472.0" fill="#28ff00"/>
<polygon points="560.3,447.6 571.9,439.9 596.8,437.0 619.9,440.9 633.3,447.6 635.3,457.2 627.6,466.8 616.0,474.5 604.5,480.3 568.0,468.0" fill="#a0ff00"/>
</g><g filter="url(#bl2)">
<polygon points="361.6,416.9 363.6,403.0 375.5,393.1 395.3,393.1 405.2,398.0 407.2,408.9 403.2,412.9 373.0,413.0" fill="#ffe800"/>
<polygon points="365.6,416.9 367.6,405.0 379.5,397.0 395.0,397.0 400.0,404.0 400.0,413.5 373.0,413.0" fill="#ffa000"/>
<polygon points="368.0,416.0 370.0,408.0 380.0,401.0 393.0,401.5 396.0,410.0 396.0,413.0" fill="#ff6400"/>
<polygon points="373.0,414.0 376.0,408.0 384.0,404.0 392.0,405.0 393.0,413.0" fill="#ff3200"/>
<polygon points="598.0,292.0 604.0,303.0 632.0,312.0 648.0,308.3" fill="#ffe800"/>
<polygon points="608.0,295.0 612.0,304.0 632.0,309.0 650.0,310.0 668.0,312.0 669.0,312.4" fill="#ffa000"/>
<polygon points="616.0,297.3 619.0,304.0 632.0,307.0 648.0,309.5 650.0,308.7" fill="#ff6400"/>
<polygon points="621.0,298.7 624.0,303.5 634.0,305.0 640.0,305.2" fill="#ff3200"/>
<polygon points="566.1,449.5 577.6,443.8 600.7,441.9 618.0,445.7 623.7,455.3 619.9,464.9 610.3,472.6 602.6,478.4 572.0,466.0" fill="#ffe800"/>
<polygon points="569.9,451.5 579.5,447.6 602.6,446.7 616.0,451.5 617.0,461.1 610.3,468.8 602.6,474.5 575.0,465.0" fill="#ffa000"/>
<polygon points="573.8,453.4 585.3,450.5 604.5,451.5 612.2,457.2 610.3,464.9 602.6,470.7 578.0,464.0" fill="#ff6400"/>
<polygon points="579.0,455.0 590.0,453.0 603.0,455.0 606.0,461.0 600.0,467.0 582.0,463.0" fill="#ff3200"/>
</g>
<path d="M0,83.0L720,290.4M0,101.3L720,308.7M0,119.7L720,327.1M0,138.1L720,345.4M0,156.4L720,363.8M0,174.8L720,382.1M0,193.1L720,400.5M0,211.4L720,418.8M0,229.8L720,437.2M0,248.2L720,455.5M0,266.5L720,473.9M0,284.9L720,492.2M0,303.2L720,510.6M0,321.6L720,528.9M0,339.9L720,547.3M0,358.2L720,565.6M0,376.6L720,584.0M0,394.9L720,602.3M0,413.3L720,620.7M0,431.7L720,639.0M0,450.0L720,657.4M0,468.4L720,675.7M49.7,150L-457.9,600M86.8,150L-422.4,600M123.9,150L-386.9,600M161.0,150L-351.4,600M198.1,150L-315.9,600M235.2,150L-280.5,600M272.3,150L-245.0,600M309.4,150L-209.5,600M346.5,150L-174.1,600M383.7,150L-138.6,600M420.8,150L-103.2,600M457.9,150L-67.7,600M495.0,150L-32.3,600M532.2,150L3.1,600M569.3,150L38.5,600M606.4,150L74.0,600M643.6,150L109.4,600M680.7,150L144.7,600M717.9,150L180.1,600M755.0,150L215.5,600M792.2,150L250.9,600M829.4,150L286.2,600M866.5,150L321.6,600M903.7,150L356.9,600M940.9,150L392.3,600M978.1,150L427.6,600M1015.2,150L462.9,600M1052.4,150L498.2,600M1089.6,150L533.5,600M1126.8,150L568.8,600M1164.0,150L604.1,600M1201.2,150L639.4,600M1238.4,150L674.7,600M1275.7,150L709.9,600M1312.9,150L745.2,600M1350.1,150L780.4,600M1387.3,150L815.7,600M1424.6,150L850.9,600" stroke="#fff" stroke-opacity="0.36" stroke-width="0.9" fill="none"/>
<path d="M335.0,417.0 L338.8,401.0 L339.8,383.2 L338.8,371.3 L343.8,355.4 L355.7,337.6 L371.5,323.7 L391.4,311.8 L413.2,303.9 L431.0,301.9 L458.8,302.9 L478.6,297.9 L491.9,287.7 L505.8,275.8 L509.7,268.8 L512.0,264.0M547.0,351.0 L534.5,363.0 L534.5,384.0 L538.7,394.5 L574.0,392.4 L603.0,392.4 L620.0,398.7 L632.0,402.8 L649.0,404.0 L720.0,405.0 L720.0,405.0M720.0,322.0 L670.0,320.0 L647.0,332.0 L632.0,338.0 L615.7,340.4 L595.0,339.4 L568.0,342.5 L547.0,351.0M545.0,522.0 L597.0,524.0 L627.6,513.0 L643.0,505.0 L645.0,486.0 L658.0,471.0 L670.0,467.0 L720.0,465.0M341.8,416.9 L345.8,401.0 L347.8,385.1 L353.7,369.3 L365.6,353.4 L385.4,339.6 L409.2,332.6 L435.0,330.6 L458.8,331.6 L484.5,339.6 L500.4,351.4 L505.3,365.3 L502.4,381.2 L490.5,395.1 L472.6,406.9 L454.8,412.9 L438.9,416.9 L420.0,425.0 L373.0,413.0M347.8,416.9 L351.7,401.0 L361.6,381.2 L377.5,365.3 L399.3,355.4 L431.0,352.4 L454.8,357.4 L465.7,364.3 L465.7,375.2 L456.8,387.1 L442.9,397.0 L431.0,406.9 L415.0,418.0 L373.0,413.0M353.7,416.9 L355.7,401.0 L365.6,383.2 L379.5,374.2 L399.3,371.3 L419.1,370.3 L430.0,381.2 L431.0,395.1 L423.1,406.9 L415.1,412.9 L373.0,413.0M357.7,416.9 L359.6,401.0 L369.6,387.1 L385.4,383.2 L407.2,383.2 L417.1,391.1 L421.1,401.0 L417.1,410.9 L373.0,413.0M361.6,416.9 L363.6,403.0 L375.5,393.1 L395.3,393.1 L405.2,398.0 L407.2,408.9 L403.2,412.9 L373.0,413.0M365.6,416.9 L367.6,405.0 L379.5,397.0 L395.0,397.0 L400.0,404.0 L400.0,413.5 L373.0,413.0M368.0,416.0 L370.0,408.0 L380.0,401.0 L393.0,401.5 L396.0,410.0 L396.0,413.0M545.0,276.7 L530.0,292.0 L513.7,303.5 L511.7,313.4 L514.7,321.4 L529.6,329.3 L563.2,330.3 L591.0,331.3 L632.0,328.0 L650.0,325.0 L672.0,322.5 L720.0,322.0 L720.0,327.0M560.0,281.0 L546.0,298.0 L539.5,311.4 L549.4,320.4 L563.2,322.3 L583.0,323.3 L632.0,321.0 L655.0,319.0 L672.0,318.0 L720.0,318.0 L720.0,327.0M575.0,285.4 L570.0,297.0 L580.0,306.0 L600.0,312.0 L632.0,316.5 L650.0,314.5 L672.0,313.8 L720.0,313.0 L720.0,327.0M588.0,289.0 L590.0,300.0 L603.0,308.0 L632.0,315.0 L650.0,313.0 L662.0,311.2M598.0,292.0 L604.0,303.0 L632.0,312.0 L648.0,308.3M608.0,295.0 L612.0,304.0 L632.0,309.0 L650.0,310.0 L668.0,312.0 L669.0,312.4M616.0,297.3 L619.0,304.0 L632.0,307.0 L648.0,309.5 L650.0,308.7M527.7,443.8 L539.2,425.5 L558.4,415.0 L581.5,410.2 L606.4,411.1 L635.3,415.9 L669.8,421.7 L720.0,425.0 L720.0,465.0 L669.8,461.1 L654.5,470.7 L639.1,480.3 L627.6,491.8 L625.6,501.4 L610.3,503.3 L603.0,500.0 L560.0,480.0 L527.0,450.0M543.0,441.9 L558.4,427.5 L587.2,422.7 L616.0,425.5 L639.1,430.3 L660.2,436.1 L664.0,447.6 L658.3,463.0 L644.9,472.6 L627.6,480.3 L610.3,486.0 L604.5,488.0 L560.0,478.0M552.7,445.7 L566.1,434.2 L593.0,431.3 L619.9,434.2 L639.1,439.9 L652.5,447.6 L650.6,461.1 L637.2,470.7 L619.9,478.4 L604.5,484.1 L565.0,472.0M560.3,447.6 L571.9,439.9 L596.8,437.0 L619.9,440.9 L633.3,447.6 L635.3,457.2 L627.6,466.8 L616.0,474.5 L604.5,480.3 L568.0,468.0M566.1,449.5 L577.6,443.8 L600.7,441.9 L618.0,445.7 L623.7,455.3 L619.9,464.9 L610.3,472.6 L602.6,478.4 L572.0,466.0M569.9,451.5 L579.5,447.6 L602.6,446.7 L616.0,451.5 L617.0,461.1 L610.3,468.8 L602.6,474.5 L575.0,465.0M573.8,453.4 L585.3,450.5 L604.5,451.5 L612.2,457.2 L610.3,464.9 L602.6,470.7 L578.0,464.0M94.0,337.0 L92.0,350.0 L86.0,362.0 L76.0,376.0 L68.0,383.0 L55.0,386.0 L47.0,390.0M56.0,369.0 L50.0,378.0 L45.0,386.0M268.5,207.3 C269,203 272,201 277,200.5M300,218 C330,218 360,222 410,237 C450,248 480,262 512,268" stroke="#111" stroke-width="0.75" fill="none" stroke-opacity="0.9"/>
<path d="M154.5,347.7 L127.1,339.8 L222.4,257.2 L249.9,265.1 L265.8,251.3 L348.1,275.0 L316.3,302.6 L371.2,318.4 L355.3,332.1M241.2,336.0 L296.1,351.8 L264.3,379.3 L319.2,395.1 L303.3,408.9M-2.9,357.4 L24.5,365.3 L8.7,379.1" stroke="#202040" stroke-opacity="0.7" stroke-width="0.8" fill="none"/>
</g>
<polyline points="720.0,327.0 258.0,194.0 36.5,386.0 309.5,465.0 373.0,413.0" fill="none" stroke="#000" stroke-width="1.8"/>
<polyline points="592.0,476.0 530.0,527.0 720.0,579.0" fill="none" stroke="#000" stroke-width="1.8"/>
<polygon points="437,428.9 521,453.1 538,458 538,460.9 437,431.9" fill="#3a9cff"/>
<line x1="373" y1="413" x2="592" y2="476" stroke="#000" stroke-width="1.1"/>
<path d="M437.0,432.6l1.2,2.6l1.6,-2.2M441.8,434.0l1.2,2.6l1.6,-2.2M446.6,435.4l1.2,2.6l1.6,-2.2M451.4,436.8l1.2,2.6l1.6,-2.2M456.2,438.2l1.2,2.6l1.6,-2.2M461.0,439.5l1.2,2.6l1.6,-2.2M465.8,440.9l1.2,2.6l1.6,-2.2M470.6,442.3l1.2,2.6l1.6,-2.2M475.4,443.7l1.2,2.6l1.6,-2.2M480.2,445.1l1.2,2.6l1.6,-2.2M485.0,446.5l1.2,2.6l1.6,-2.2M489.8,447.8l1.2,2.6l1.6,-2.2M494.6,449.2l1.2,2.6l1.6,-2.2M499.4,450.6l1.2,2.6l1.6,-2.2M504.2,452.0l1.2,2.6l1.6,-2.2M509.0,453.4l1.2,2.6l1.6,-2.2M513.8,454.8l1.2,2.6l1.6,-2.2M518.6,456.1l1.2,2.6l1.6,-2.2M523.4,457.5l1.2,2.6l1.6,-2.2M528.2,458.9l1.2,2.6l1.6,-2.2M533.0,460.3l1.2,2.6l1.6,-2.2M537.8,461.7l1.2,2.6l1.6,-2.2M542.6,463.0l1.2,2.6l1.6,-2.2" stroke="#1a2a80" stroke-width="1.5" fill="none"/>
<polygon points="249,203.2 632.2,312.9 632.2,348.6 604.8,344.2 589.4,327.2 577.3,315.1 562,303.6 549.9,298.7 540,294.8 246,208" fill="#0000ff"/>
<text x="583" y="466.5" font-family="Liberation Sans" font-size="11" font-style="italic" letter-spacing="0.3" fill="#3a48ff">10,69</text>
<polygon points="384.4,402.9 602.9,465.6 602.9,520 568.2,494 548.4,469.3 533.5,461.9 518.7,452.8 479,440.5 444,430.3 432,432 412,442 384.4,450" fill="#0000ff"/>
<g><circle cx="36.5" cy="387" r="3" fill="#3a50ff" fill-opacity="0.8"/><polygon points="30.5,397 41.5,397 36.5,388" fill="#6070ff" fill-opacity="0.75"/></g>
<text x="40.5" y="397" font-family="Liberation Sans" font-size="9" fill="#444">Gel</text>
<g><circle cx="309.5" cy="466" r="3" fill="#3a50ff" fill-opacity="0.8"/><polygon points="303.5,476 314.5,476 309.5,467" fill="#6070ff" fill-opacity="0.75"/></g>
<text x="313.5" y="476" font-family="Liberation Sans" font-size="9" fill="#444">Gel</text>
<g><circle cx="530" cy="528" r="3" fill="#3a50ff" fill-opacity="0.8"/><polygon points="524,538 535,538 530,529" fill="#6070ff" fill-opacity="0.75"/></g>
<text x="534" y="538" font-family="Liberation Sans" font-size="9" fill="#444">Gel</text>
<g><rect x="329.6" y="216.0" width="20.9" height="8" fill="#fff" fill-opacity="0.7"/><text x="340.0" y="222.7" text-anchor="middle" font-family="Liberation Sans" font-size="7.6" letter-spacing="0.35" fill="#111">1,00</text></g>
<g><rect x="301.6" y="270.0" width="20.9" height="8" fill="#fff" fill-opacity="0.7"/><text x="312.0" y="276.7" text-anchor="middle" font-family="Liberation Sans" font-size="7.6" letter-spacing="0.35" fill="#111">0,00</text></g>
<g><rect x="356.6" y="326.0" width="20.9" height="8" fill="#fff" fill-opacity="0.7"/><text x="367.0" y="332.7" text-anchor="middle" font-family="Liberation Sans" font-size="7.6" letter-spacing="0.35" fill="#111">1,00</text></g>
<g><rect x="436.6" y="326.0" width="20.9" height="8" fill="#fff" fill-opacity="0.7"/><text x="447.0" y="332.7" text-anchor="middle" font-family="Liberation Sans" font-size="7.6" letter-spacing="0.35" fill="#111">2,00</text></g>
<g><rect x="427.6" y="347.0" width="20.9" height="8" fill="#fff" fill-opacity="0.7"/><text x="438.0" y="353.7" text-anchor="middle" font-family="Liberation Sans" font-size="7.6" letter-spacing="0.35" fill="#111">3,00</text></g>
<g><rect x="395.6" y="366.0" width="20.9" height="8" fill="#fff" fill-opacity="0.7"/><text x="406.0" y="372.7" text-anchor="middle" font-family="Liberation Sans" font-size="7.6" letter-spacing="0.35" fill="#111">4,00</text></g>
<g><rect x="395.6" y="377.0" width="20.9" height="8" fill="#fff" fill-opacity="0.7"/><text x="406.0" y="383.7" text-anchor="middle" font-family="Liberation Sans" font-size="7.6" letter-spacing="0.35" fill="#111">5,00</text></g>
<g><rect x="371.6" y="386.5" width="20.9" height="8" fill="#fff" fill-opacity="0.7"/><text x="382.0" y="393.2" text-anchor="middle" font-family="Liberation Sans" font-size="7.6" letter-spacing="0.35" fill="#111">6,00</text></g>
<g><rect x="376.6" y="390.0" width="20.9" height="8" fill="#fff" fill-opacity="0.7"/><text x="387.0" y="396.7" text-anchor="middle" font-family="Liberation Sans" font-size="7.6" letter-spacing="0.35" fill="#111">7,00</text></g>
<g><rect x="362.6" y="404.0" width="20.9" height="8" fill="#fff" fill-opacity="0.7"/><text x="373.0" y="410.7" text-anchor="middle" font-family="Liberation Sans" font-size="7.6" letter-spacing="0.35" fill="#111">8,00</text></g>
<g><rect x="70.5" y="360.0" width="20.9" height="8" fill="#fff" fill-opacity="0.7"/><text x="81.0" y="366.7" text-anchor="middle" font-family="Liberation Sans" font-size="7.6" letter-spacing="0.35" fill="#111">1,00</text></g>
<g><rect x="44.5" y="368.0" width="20.9" height="8" fill="#fff" fill-opacity="0.7"/><text x="55.0" y="374.7" text-anchor="middle" font-family="Liberation Sans" font-size="7.6" letter-spacing="0.35" fill="#111">2,00</text></g>
<g><rect x="529.5" y="324.0" width="20.9" height="8" fill="#fff" fill-opacity="0.7"/><text x="540.0" y="330.7" text-anchor="middle" font-family="Liberation Sans" font-size="7.6" letter-spacing="0.35" fill="#111">2,00</text></g>
<g><rect x="557.5" y="317.0" width="20.9" height="8" fill="#fff" fill-opacity="0.7"/><text x="568.0" y="323.7" text-anchor="middle" font-family="Liberation Sans" font-size="7.6" letter-spacing="0.35" fill="#111">3,00</text></g>
<g><rect x="631.0" y="300.5" width="20.9" height="8" fill="#fff" fill-opacity="0.7"/><text x="641.5" y="307.2" text-anchor="middle" font-family="Liberation Sans" font-size="7.6" letter-spacing="0.35" fill="#111">9,00</text></g>
<g><rect x="647.5" y="399.0" width="20.9" height="8" fill="#fff" fill-opacity="0.7"/><text x="658.0" y="405.7" text-anchor="middle" font-family="Liberation Sans" font-size="7.6" letter-spacing="0.35" fill="#111">1,00</text></g>
<g><rect x="638.5" y="428.0" width="20.9" height="8" fill="#fff" fill-opacity="0.7"/><text x="649.0" y="434.7" text-anchor="middle" font-family="Liberation Sans" font-size="7.6" letter-spacing="0.35" fill="#111">3,00</text></g>
<g><rect x="635.5" y="440.5" width="20.9" height="8" fill="#fff" fill-opacity="0.7"/><text x="646.0" y="447.2" text-anchor="middle" font-family="Liberation Sans" font-size="7.6" letter-spacing="0.35" fill="#111">4,00</text></g>
<g><rect x="614.5" y="441.0" width="20.9" height="8" fill="#fff" fill-opacity="0.7"/><text x="625.0" y="447.7" text-anchor="middle" font-family="Liberation Sans" font-size="7.6" letter-spacing="0.35" fill="#111">5,00</text></g>
<g><rect x="600.5" y="442.5" width="20.9" height="8" fill="#fff" fill-opacity="0.7"/><text x="611.0" y="449.2" text-anchor="middle" font-family="Liberation Sans" font-size="7.6" letter-spacing="0.35" fill="#111">6,00</text></g>
<g><rect x="599.5" y="448.0" width="20.9" height="8" fill="#fff" fill-opacity="0.7"/><text x="610.0" y="454.7" text-anchor="middle" font-family="Liberation Sans" font-size="7.6" letter-spacing="0.35" fill="#111">7,00</text></g>
<g><rect x="599.5" y="453.5" width="20.9" height="8" fill="#fff" fill-opacity="0.7"/><text x="610.0" y="460.2" text-anchor="middle" font-family="Liberation Sans" font-size="7.6" letter-spacing="0.35" fill="#111">8,00</text></g>
<g><rect x="629.5" y="556.0" width="20.9" height="8" fill="#fff" fill-opacity="0.7"/><text x="640.0" y="562.7" text-anchor="middle" font-family="Liberation Sans" font-size="7.6" letter-spacing="0.35" fill="#111">0,00</text></g>
<rect x="620" y="303" width="13" height="8" fill="#fff" fill-opacity="0.7"/><text x="621.5" y="310.5" font-family="Liberation Sans" font-size="7.6" fill="#222">7</text><text x="627.5" y="308" font-family="Liberation Sans" font-size="7.6" fill="#555">8</text>
<g transform="rotate(16 441 259)"><rect x="423" y="254" width="36" height="10" fill="#fff"/><text x="441" y="262" text-anchor="middle" font-family="Liberation Mono" font-size="8" font-style="italic" fill="#0000ff">/ 12,74</text></g>
<g transform="rotate(16 493 436)"><rect x="475" y="431" width="36" height="10" fill="#fff"/><text x="493" y="439" text-anchor="middle" font-family="Liberation Mono" font-size="8" font-style="italic" fill="#0000ff">/ 15,42</text></g>
<g transform="rotate(-90 611 357)"><rect x="598" y="351" width="26" height="11" fill="#c8d0f8"/><text x="611" y="360.5" text-anchor="middle" font-family="Liberation Mono" font-weight="bold" font-size="9.5" fill="#111">6,71</text></g>
<g transform="rotate(-90 606 507)"><rect x="593" y="501" width="26" height="11" fill="#c8d0f8"/><text x="606" y="510.5" text-anchor="middle" font-family="Liberation Mono" font-weight="bold" font-size="9.5" fill="#111">9,12</text></g>
<path d="M268.5,214v12M268.5,214l12.5,5M268.5,214l-7.5,5M266.5,223l2,3.5 2,-3.5" stroke="#444" stroke-width="0.9" fill="none"/><text x="282" y="226" font-size="7.5" font-family="Liberation Sans" fill="#333">X</text><text x="259" y="230" font-size="7.5" font-family="Liberation Sans" fill="#333">Y</text><text x="268" y="237" font-size="7.5" font-family="Liberation Sans" fill="#333">Z</text>
<path d="M53,643v12M53,643l-5,4M53,643l13,3" stroke="#222" stroke-width="1" fill="none"/><circle cx="53" cy="655" r="1.2" fill="#222"/><circle cx="66" cy="646" r="1.2" fill="#222"/><circle cx="48" cy="647" r="1.2" fill="#222"/><text x="70" y="650" font-size="9" font-family="Liberation Sans" fill="#333">X</text><text x="39" y="656" font-size="9" font-family="Liberation Sans" fill="#333">Y</text><text x="50" y="665" font-size="9" font-family="Liberation Sans" fill="#333">Z</text>
</svg>
<div class="a" style="left:972px;top:111px;width:17px;height:563px;background:#f0f0f0"></div>
<div class="a" style="left:975px;top:294px;width:13px;height:196px;background:#cdcdcd"></div>
<svg class="a" style="left:977px;top:115px" width="9" height="6"><path d="M1 5l3.5-3.5L8 5" fill="none" stroke="#606060" stroke-width="1.3"/></svg>
<svg class="a" style="left:977px;top:665px" width="9" height="6"><path d="M1 1l3.5 3.5L8 1" fill="none" stroke="#606060" stroke-width="1.3"/></svg>
<div class="a" style="left:21px;top:674px;width:951px;height:16px;background:#f0f0f0;border-top:1px solid #e6eef8"></div>
<div class="a" style="left:343px;top:676px;width:309px;height:13px;background:#cdcdcd"></div>
<svg class="a" style="left:25px;top:678px" width="6" height="9"><path d="M5 1L1.5 4.5L5 8" fill="none" stroke="#606060" stroke-width="1.3"/></svg>
<svg class="a" style="left:963px;top:678px" width="6" height="9"><path d="M1 1l3.5 3.5L1 8" fill="none" stroke="#606060" stroke-width="1.3"/></svg>
<div class="a" style="left:972px;top:674px;width:17px;height:16px;background:#dce6f3"></div>
<div class="a" style="left:20px;top:690px;width:968px;height:20px;background:#6c99d4"></div>
<div class="a" style="left:20px;top:693px;width:104px;height:16px;background:linear-gradient(#d3e5fb,#c2d9f6);border:1px solid #9cbbe6;border-top:none"></div>
<div class="a" style="left:126px;top:693px;width:148px;height:16px;background:linear-gradient(#d3e5fb,#c2d9f6);border:1px solid #9cbbe6;border-top:none"></div>
<svg class="a" style="left:23px;top:695px" width="13" height="12" viewBox="0 0 13 12"><rect x="0.5" y="0.5" width="12" height="11" fill="#fff" stroke="#1a1a6a"/><rect x="0.5" y="0.5" width="12" height="3" fill="#1a1a6a"/><path d="M2 6h3M7 6h3M2 9h3M7 9h3" stroke="#555"/></svg>
<svg class="a" style="left:129px;top:695px" width="13" height="12" viewBox="0 0 13 12"><rect x="0.5" y="0.5" width="12" height="11" fill="#fff" stroke="#1a1a6a"/><path d="M0.5 3.5h12M0.5 6.5h12M0.5 9h12M4 0v12M8 0v12" stroke="#1a1a6a" stroke-width=".7"/></svg>
<div class="t" style="left:39px;top:695px;font-size:11px;color:#3459b5;font-weight:normal;font-family:'Liberation Sans',sans-serif;letter-spacing:-0.4px;">Meldungs-Ansicht</div>
<div class="t" style="left:144px;top:695px;font-size:11px;color:#3459b5;font-weight:normal;font-family:'Liberation Sans',sans-serif;letter-spacing:-0.4px;">Einwirkungstabellen-Ansicht</div>
<div class="a" style="left:1px;top:709px;width:1007px;height:19px;background:linear-gradient(#dae9fb,#c5dcf8 40%,#b6d3f8);border-top:1px solid #a6c4ea"></div>
<div class="a" style="left:0px;top:728px;width:1009px;height:1px;background:#8c8c8c"></div>
<svg class="a" style="left:994px;top:716px" width="12" height="11"><g fill="#8a9ab0"><rect x="9" y="1" width="2" height="2"/><rect x="6" y="4" width="2" height="2"/><rect x="9" y="4" width="2" height="2"/><rect x="3" y="7" width="2" height="2"/><rect x="6" y="7" width="2" height="2"/><rect x="9" y="7" width="2" height="2"/></g></svg>
<div class="a" style="left:670.5px;top:179px;width:299.5px;height:443px;background:#f0f0f0;box-shadow:0 0 7px 2px rgba(0,0,0,0.16);border:1px solid #dcdcdc"></div>
<div class="a" style="left:671.5px;top:180px;width:297.5px;height:27px;background:#fff"></div>
<div class="t" style="left:678px;top:188px;font-size:11px;color:#9a9a9a;font-weight:normal;font-family:'Liberation Sans',sans-serif;letter-spacing:-0.3px;-webkit-text-stroke:0;">Darstellung von Ergebnissen</div>
<div class="a" style="left:953px;top:186px;width:16px;height:16px;background:#e5e5e5"></div>
<svg class="a" style="left:958px;top:191px" width="6" height="6"><path d="M0.5 0.5l5 5M5.5 0.5l-5 5" stroke="#fff" stroke-width="1"/></svg>
<div class="a" style="left:672px;top:207px;width:296px;height:21px;background:#c3dcfb"></div>
<div class="t" style="left:686px;top:211px;font-size:11px;color:#111;font-weight:normal;font-family:'Liberation Sans',sans-serif;letter-spacing:-0.45px;-webkit-text-stroke:0;">Darstellungseinstellungen</div>
<div class="t" style="left:817px;top:211px;font-size:11px;color:#111;font-weight:normal;font-family:'Liberation Sans',sans-serif;letter-spacing:-0.45px;-webkit-text-stroke:0;">Modus</div>
<div class="a" style="left:675px;top:233px;width:290px;height:68px;background:#fff;border:1px solid #a0a0a0"></div>
<div class="a" style="left:711px;top:235px;width:140px;height:14px;background:#ececec"></div>
<svg class="a" style="left:689px;top:238px" width="5" height="8"><path d="M0 0l4 4-4 4z" fill="#111"/></svg>
<svg class="a" style="left:696px;top:234px" width="14" height="14" viewBox="0 0 14 14"><path d="M7 0.5l1.9 4.3 4.6.4-3.5 3 1.1 4.6L7 10.4 2.9 12.8 4 8.2 0.5 5.2l4.6-.4z" fill="#7aa86a" stroke="#4a7a8a" stroke-width="0.8"/></svg>
<div class="t" style="left:712px;top:237.5px;font-size:10px;color:#111;font-weight:normal;font-family:'Liberation Sans',sans-serif;letter-spacing:-0.45px;-webkit-text-stroke:0;">Standard&nbsp;&nbsp;&nbsp;(Normale Einstellungen)</div>
<div class="t" style="left:712px;top:251.5px;font-size:10px;color:#111;font-weight:normal;font-family:'Liberation Sans',sans-serif;letter-spacing:-0.45px;-webkit-text-stroke:0;">Neu</div>
<div class="a" style="left:675px;top:306px;width:290px;height:224px;background:#fff;border:1px solid #a0a0a0;overflow:hidden"></div>
<div class="a" style="left:676px;top:307px;width:18px;height:222px;background:#f0f3f9"></div>
<div class="a" style="left:694px;top:320.75px;width:256px;height:1px;background:#f2f2f2"></div>
<div class="a" style="left:812px;top:308.25px;width:1px;height:13.5px;background:#f2f2f2"></div>
<div class="t" style="left:697px;top:310.25px;width:115px;overflow:hidden;font-size:10px;color:#111;font-family:'Liberation Sans',sans-serif;letter-spacing:-0.3px;-webkit-text-stroke:0">Zusätzlich Sprünge beschrifte</div>
<div class="a" style="left:814px;top:309.0px;width:17px;height:11px;background:#fff;border:1px solid #333"></div>
<div class="t" style="left:838px;top:310.05px;font-size:11px;color:#111;font-weight:bold;font-family:'Liberation Sans',sans-serif;letter-spacing:-0.2px;-webkit-text-stroke:0;">Nein</div>
<div class="a" style="left:694px;top:334.25px;width:256px;height:1px;background:#f2f2f2"></div>
<div class="a" style="left:812px;top:321.75px;width:1px;height:13.5px;background:#f2f2f2"></div>
<div class="t" style="left:697px;top:323.75px;width:115px;overflow:hidden;font-size:10px;color:#111;font-family:'Liberation Sans',sans-serif;letter-spacing:-0.3px;-webkit-text-stroke:0">Zusätzlich Randwerte besch</div>
<div class="a" style="left:814px;top:322.5px;width:17px;height:11px;background:#fff;border:1px solid #333"></div>
<div class="t" style="left:838px;top:323.55px;font-size:11px;color:#111;font-weight:bold;font-family:'Liberation Sans',sans-serif;letter-spacing:-0.2px;-webkit-text-stroke:0;">Nein</div>
<div class="a" style="left:694px;top:347.75px;width:256px;height:1px;background:#f2f2f2"></div>
<div class="a" style="left:812px;top:335.25px;width:1px;height:13.5px;background:#f2f2f2"></div>
<div class="t" style="left:697px;top:337.25px;width:115px;overflow:hidden;font-size:10px;color:#111;font-family:'Liberation Sans',sans-serif;letter-spacing:-0.3px;-webkit-text-stroke:0">Zusätzlich Zwangspunkte be</div>
<div class="a" style="left:814px;top:336.0px;width:17px;height:11px;background:#fff;border:1px solid #333"></div>
<div class="t" style="left:838px;top:337.05px;font-size:11px;color:#111;font-weight:bold;font-family:'Liberation Sans',sans-serif;letter-spacing:-0.2px;-webkit-text-stroke:0;">Nein</div>
<div class="a" style="left:694px;top:361.25px;width:256px;height:1px;background:#f2f2f2"></div>
<div class="a" style="left:812px;top:348.75px;width:1px;height:13.5px;background:#f2f2f2"></div>
<div class="t" style="left:697px;top:350.75px;width:115px;overflow:hidden;font-size:10px;color:#111;font-family:'Liberation Sans',sans-serif;letter-spacing:-0.3px;-webkit-text-stroke:0">Nullwerte der Kurve</div>
<div class="t" style="left:816px;top:350.55px;width:134px;overflow:hidden;font-size:11px;color:#111;font-weight:bold;font-family:'Liberation Sans',sans-serif;letter-spacing:-0.5px;-webkit-text-stroke:0">Unterdrücken</div>
<div class="a" style="left:694px;top:374.75px;width:256px;height:1px;background:#f2f2f2"></div>
<div class="a" style="left:812px;top:362.25px;width:1px;height:13.5px;background:#f2f2f2"></div>
<div class="t" style="left:697px;top:364.25px;width:115px;overflow:hidden;font-size:10px;color:#111;font-family:'Liberation Sans',sans-serif;letter-spacing:-0.3px;-webkit-text-stroke:0">Nur Werte größer als</div>
<div class="a" style="left:694px;top:388.25px;width:256px;height:1px;background:#f2f2f2"></div>
<div class="a" style="left:812px;top:375.75px;width:1px;height:13.5px;background:#f2f2f2"></div>
<div class="t" style="left:697px;top:377.75px;width:115px;overflow:hidden;font-size:10px;color:#111;font-family:'Liberation Sans',sans-serif;letter-spacing:-0.3px;-webkit-text-stroke:0">oder Werte kleiner als</div>
<div class="a" style="left:676px;top:389.25px;width:274px;height:13.5px;background:#f0f3f9"></div>
<svg class="a" style="left:681px;top:393.25px" width="8" height="6"><path d="M0.5 0.5l3.5 3.5 3.5-3.5" fill="none" stroke="#333" stroke-width="1.1"/></svg>
<div class="t" style="left:697px;top:390.75px;font-size:11px;color:#111;font-weight:bold;font-family:'Liberation Sans',sans-serif;letter-spacing:-0.5px;-webkit-text-stroke:0;">5. Flächenergebnisse</div>
<div class="a" style="left:694px;top:415.25px;width:256px;height:1px;background:#f2f2f2"></div>
<div class="a" style="left:812px;top:402.75px;width:1px;height:13.5px;background:#f2f2f2"></div>
<div class="t" style="left:697px;top:404.75px;width:115px;overflow:hidden;font-size:10px;color:#111;font-family:'Liberation Sans',sans-serif;letter-spacing:-0.3px;-webkit-text-stroke:0">Anzuzeigende Ergebnisse</div>
<div class="t" style="left:816px;top:404.55px;width:134px;overflow:hidden;font-size:11px;color:#111;font-weight:bold;font-family:'Liberation Sans',sans-serif;letter-spacing:-0.5px;-webkit-text-stroke:0">Flächig und in Ergebnislinien</div>
<div class="a" style="left:694px;top:428.75px;width:256px;height:1px;background:#f2f2f2"></div>
<div class="a" style="left:812px;top:416.25px;width:1px;height:13.5px;background:#f2f2f2"></div>
<div class="t" style="left:697px;top:418.25px;width:115px;overflow:hidden;font-size:10px;color:#111;font-family:'Liberation Sans',sans-serif;letter-spacing:-0.3px;-webkit-text-stroke:0">Ergebnislinien-Typ</div>
<div class="t" style="left:816px;top:418.05px;width:134px;overflow:hidden;font-size:11px;color:#111;font-weight:bold;font-family:'Liberation Sans',sans-serif;letter-spacing:-0.5px;-webkit-text-stroke:0">in Standard-Richtung</div>
<div class="a" style="left:694px;top:442.25px;width:256px;height:1px;background:#f2f2f2"></div>
<div class="a" style="left:812px;top:429.75px;width:1px;height:13.5px;background:#f2f2f2"></div>
<div class="t" style="left:697px;top:431.75px;width:115px;overflow:hidden;font-size:10px;color:#111;font-family:'Liberation Sans',sans-serif;letter-spacing:-0.3px;-webkit-text-stroke:0">Werte von Ergebnislinien</div>
<div class="t" style="left:816px;top:431.55px;width:134px;overflow:hidden;font-size:11px;color:#111;font-weight:bold;font-family:'Liberation Sans',sans-serif;letter-spacing:-0.5px;-webkit-text-stroke:0">Kurvenwerte und Integral</div>
<div class="a" style="left:694px;top:455.75px;width:256px;height:1px;background:#f2f2f2"></div>
<div class="a" style="left:812px;top:443.25px;width:1px;height:13.5px;background:#f2f2f2"></div>
<div class="t" style="left:697px;top:445.25px;width:115px;overflow:hidden;font-size:10px;color:#111;font-family:'Liberation Sans',sans-serif;letter-spacing:-0.3px;-webkit-text-stroke:0">Beschriftung</div>
<div class="t" style="left:816px;top:445.05px;width:134px;overflow:hidden;font-size:11px;color:#111;font-weight:bold;font-family:'Liberation Sans',sans-serif;letter-spacing:-0.5px;-webkit-text-stroke:0">In FE-Knoten</div>
<div class="a" style="left:694px;top:469.25px;width:256px;height:1px;background:#f2f2f2"></div>
<div class="a" style="left:812px;top:456.75px;width:1px;height:13.5px;background:#f2f2f2"></div>
<div class="t" style="left:697px;top:458.75px;width:115px;overflow:hidden;font-size:10px;color:#111;font-family:'Liberation Sans',sans-serif;letter-spacing:-0.3px;-webkit-text-stroke:0">Darzustellende Flächenwerte</div>
<div class="t" style="left:816px;top:458.55px;width:134px;overflow:hidden;font-size:11px;color:#111;font-weight:bold;font-family:'Liberation Sans',sans-serif;letter-spacing:-0.5px;-webkit-text-stroke:0">Globale Extremwerte (pro Gruppe)</div>
<div class="a" style="left:694px;top:482.75px;width:256px;height:1px;background:#f2f2f2"></div>
<div class="a" style="left:812px;top:470.25px;width:1px;height:13.5px;background:#f2f2f2"></div>
<div class="t" style="left:697px;top:472.25px;width:115px;overflow:hidden;font-size:10px;color:#111;font-family:'Liberation Sans',sans-serif;letter-spacing:-0.3px;-webkit-text-stroke:0">Zusätzlich Sprünge beschrifte</div>
<div class="a" style="left:814px;top:471.0px;width:17px;height:11px;background:#fff;border:1px solid #333"></div>
<div class="t" style="left:838px;top:472.05px;font-size:11px;color:#111;font-weight:bold;font-family:'Liberation Sans',sans-serif;letter-spacing:-0.2px;-webkit-text-stroke:0;">Nein</div>
<div class="a" style="left:694px;top:496.25px;width:256px;height:1px;background:#f2f2f2"></div>
<div class="a" style="left:812px;top:483.75px;width:1px;height:13.5px;background:#f2f2f2"></div>
<div class="t" style="left:697px;top:485.75px;width:115px;overflow:hidden;font-size:10px;color:#111;font-family:'Liberation Sans',sans-serif;letter-spacing:-0.3px;-webkit-text-stroke:0">Nullwerte in der Fläche</div>
<div class="t" style="left:816px;top:485.55px;width:134px;overflow:hidden;font-size:11px;color:#111;font-weight:bold;font-family:'Liberation Sans',sans-serif;letter-spacing:-0.5px;-webkit-text-stroke:0">Unterdrücken</div>
<div class="a" style="left:694px;top:509.75px;width:256px;height:1px;background:#f2f2f2"></div>
<div class="a" style="left:812px;top:497.25px;width:1px;height:13.5px;background:#f2f2f2"></div>
<div class="t" style="left:697px;top:499.25px;width:115px;overflow:hidden;font-size:10px;color:#111;font-family:'Liberation Sans',sans-serif;letter-spacing:-0.3px;-webkit-text-stroke:0">Werte zusammenfassen</div>
<div class="a" style="left:814px;top:498.0px;width:17px;height:11px;background:#fff;border:1px solid #333"></div>
<svg class="a" style="left:818px;top:499.75px" width="10" height="8"><path d="M1 4l3 3 5-6" fill="none" stroke="#1a9a30" stroke-width="1.6"/></svg>
<div class="t" style="left:837px;top:499.05px;font-size:11px;color:#111;font-weight:bold;font-family:'Liberation Sans',sans-serif;letter-spacing:-0.2px;-webkit-text-stroke:0;">Ja</div>
<div class="a" style="left:694px;top:523.25px;width:256px;height:1px;background:#f2f2f2"></div>
<div class="a" style="left:812px;top:510.75px;width:1px;height:13.5px;background:#f2f2f2"></div>
<div class="t" style="left:697px;top:512.75px;width:115px;overflow:hidden;font-size:10px;color:#111;font-family:'Liberation Sans',sans-serif;letter-spacing:-0.3px;-webkit-text-stroke:0">Nur Fe-Werte größer als</div>
<div class="a" style="left:694px;top:536.75px;width:256px;height:1px;background:#f2f2f2"></div>
<div class="a" style="left:812px;top:524.25px;width:1px;height:13.5px;background:#f2f2f2"></div>
<div class="t" style="left:697px;top:526.25px;width:115px;overflow:hidden;font-size:10px;color:#111;font-family:'Liberation Sans',sans-serif;letter-spacing:-0.3px;-webkit-text-stroke:0">oder Fe-Werte kleiner als</div>
<div class="a" style="left:950px;top:307px;width:14px;height:222px;background:#f0f0f0"></div>
<div class="a" style="left:951px;top:390px;width:12px;height:83px;background:#cdcdcd"></div>
<svg class="a" style="left:953px;top:312px" width="9" height="6"><path d="M1 5l3.5-3.5L8 5" fill="none" stroke="#555" stroke-width="1.3"/></svg>
<svg class="a" style="left:953px;top:519px" width="9" height="6"><path d="M1 1l3.5 3.5L8 1" fill="none" stroke="#555" stroke-width="1.3"/></svg>
<div class="a" style="left:675px;top:533px;width:290px;height:50px;background:#f0f0f0;border:1px solid #a0a0a0"></div>
<div class="t" style="left:680px;top:537px;font-size:11px;color:#111;font-weight:bold;font-family:'Liberation Sans',sans-serif;letter-spacing:-0.5px;-webkit-text-stroke:0;">Anzuzeigende Ergebnisse</div>
<div class="t" style="left:680px;top:549px;font-size:10px;color:#222;font-weight:normal;font-family:'Liberation Sans',sans-serif;letter-spacing:-0.45px;-webkit-text-stroke:0;">Gibt an ob Ergebnisse flächig angezeigt werden oder nur in</div>
<div class="t" style="left:680px;top:560px;font-size:10px;color:#222;font-weight:normal;font-family:'Liberation Sans',sans-serif;letter-spacing:-0.45px;-webkit-text-stroke:0;">Ergebnislinien oder beides.</div>
<div class="a" style="left:829px;top:594px;width:62px;height:18px;background:#e1e1e1;border:1px solid #adadad"></div>
<div class="a" style="left:897px;top:594px;width:62px;height:18px;background:#e1e1e1;border:1px solid #adadad"></div>
<div class="t" style="left:851px;top:598px;font-size:11px;color:#111;font-weight:normal;font-family:'Liberation Sans',sans-serif;letter-spacing:-0.3px;-webkit-text-stroke:0;">OK</div>
<div class="t" style="left:918px;top:598px;font-size:11px;color:#111;font-weight:normal;font-family:'Liberation Sans',sans-serif;letter-spacing:-0.3px;-webkit-text-stroke:0;">Hilfe</div>
<svg class="a" style="left:960px;top:612px" width="8" height="8"><g fill="#a8a8a8"><rect x="6" y="0" width="1.5" height="1.5"/><rect x="3" y="3" width="1.5" height="1.5"/><rect x="6" y="3" width="1.5" height="1.5"/><rect x="0" y="6" width="1.5" height="1.5"/><rect x="3" y="6" width="1.5" height="1.5"/><rect x="6" y="6" width="1.5" height="1.5"/></g></svg>
</body></html>
